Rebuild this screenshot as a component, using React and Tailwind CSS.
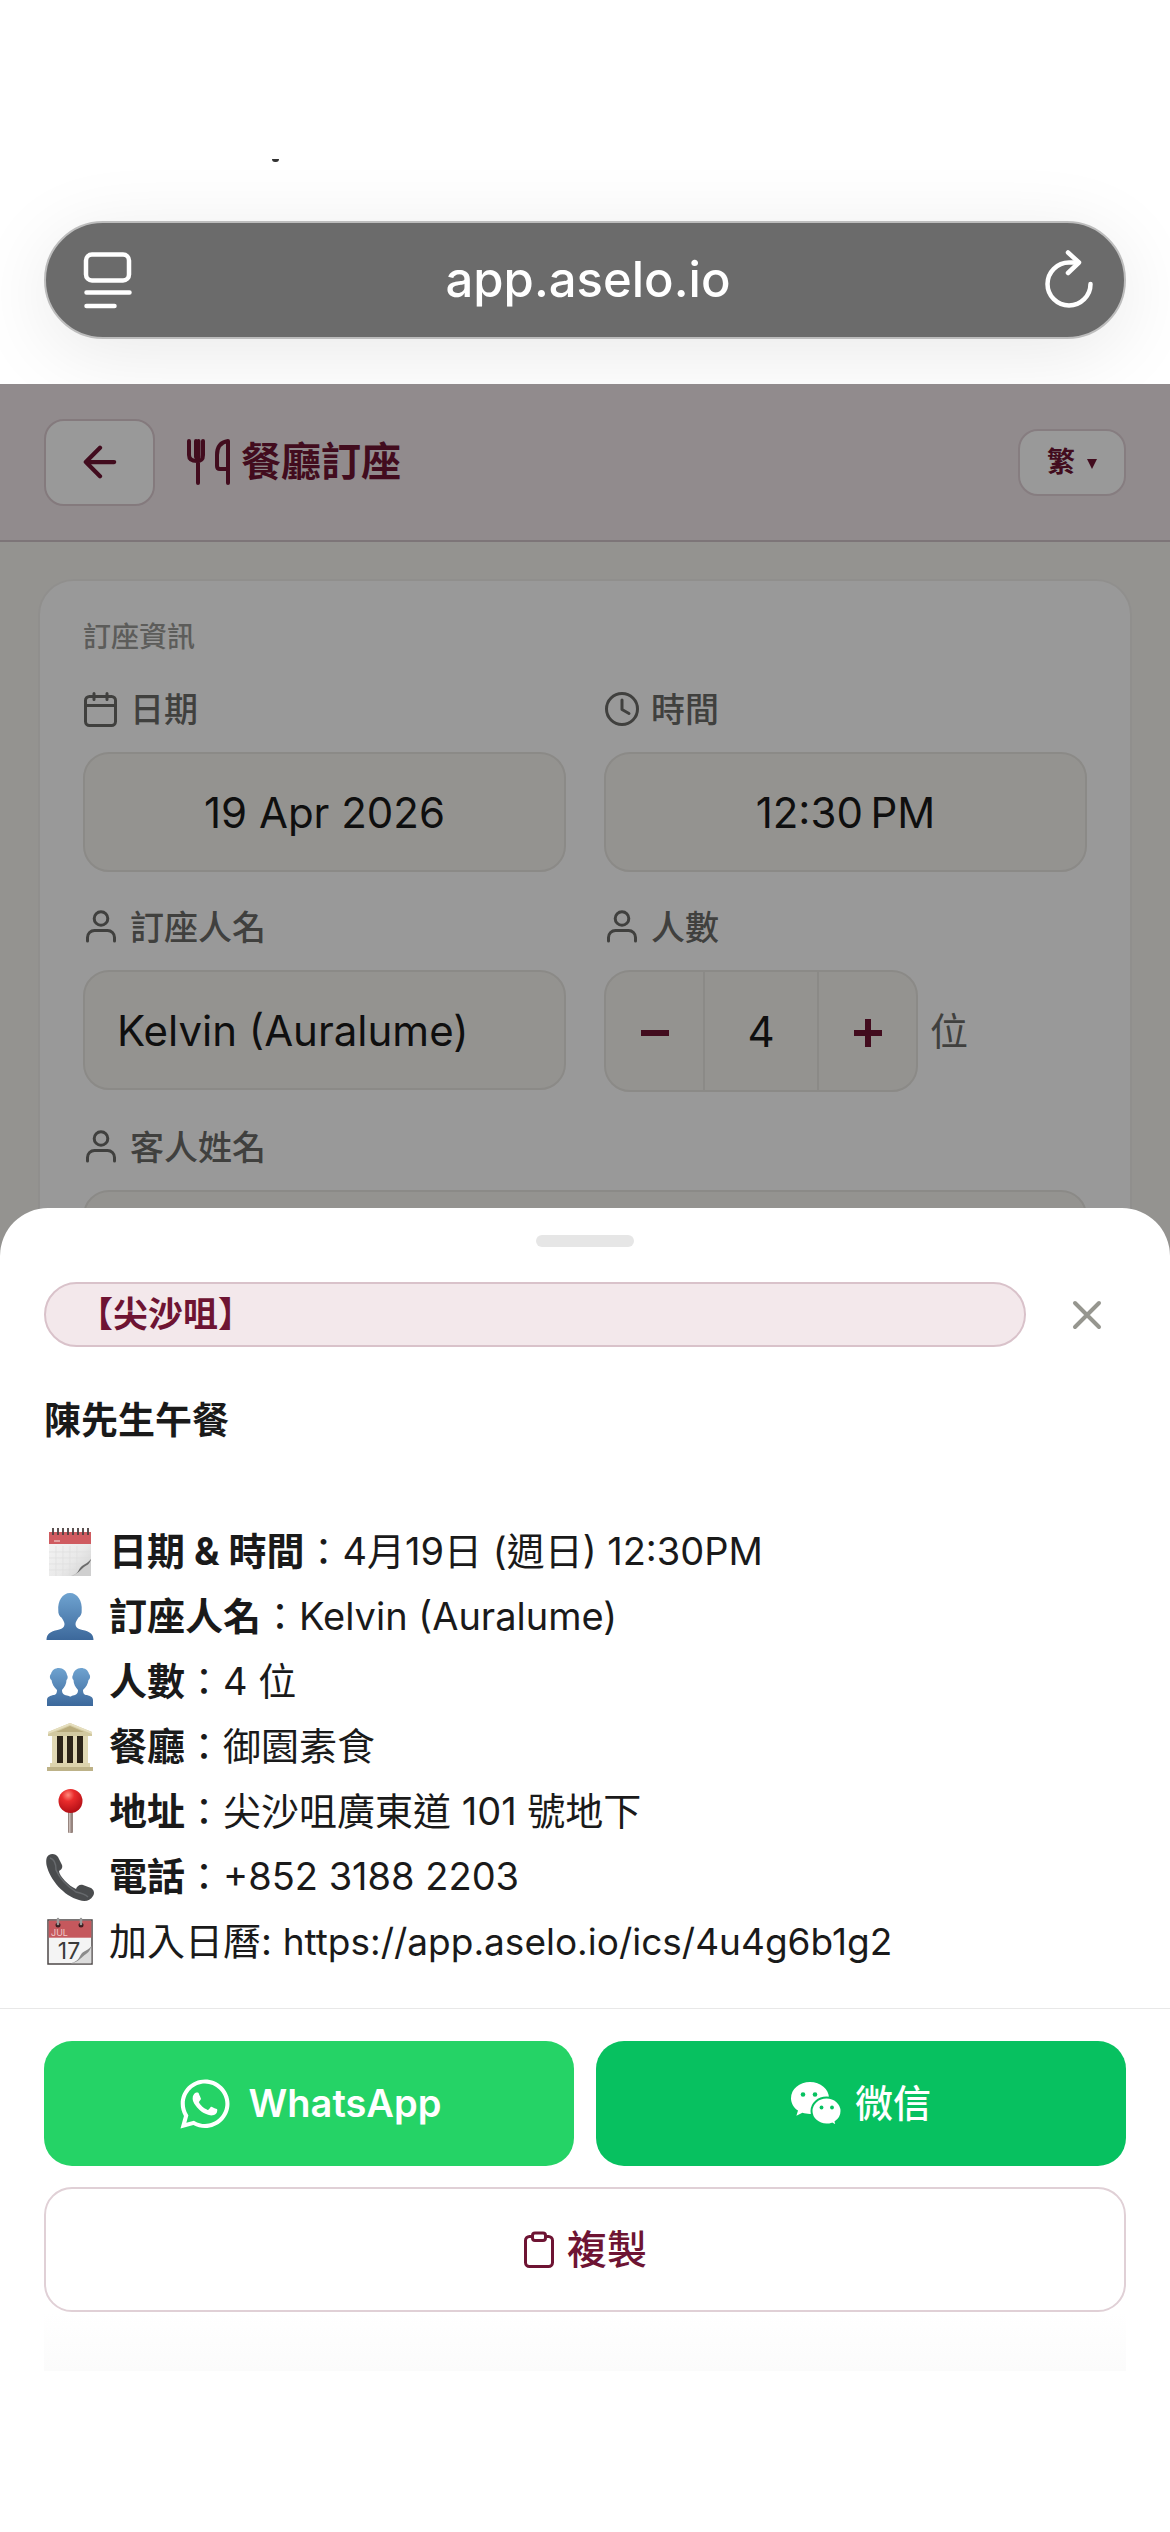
import { useState } from "react";
import { FaWhatsapp } from "react-icons/fa";

const font = "font-['Inter','Noto_Sans_CJK_TC',sans-serif]";

/* ---------- line icons ---------- */

function CalendarIcon() {
  return (
    <svg className="w-9 h-9" viewBox="0 0 36 36" fill="none" stroke="currentColor" strokeWidth="3" strokeLinecap="round">
      <rect x="2.500" y="4.500" width="30" height="29" rx="4" />
      <path d="M3 13.500h29M11 1.500v6M24 1.500v6" />
    </svg>
  );
}

function ClockIcon() {
  return (
    <svg className="w-9 h-9" viewBox="0 0 36 36" fill="none" stroke="currentColor" strokeWidth="3" strokeLinecap="round" strokeLinejoin="round">
      <circle cx="18" cy="17" r="15.500" />
      <path d="M18 8v9.500l7 4" />
    </svg>
  );
}

function PersonIcon() {
  return (
    <svg className="w-9 h-9" viewBox="0 0 36 36" fill="none" stroke="currentColor" strokeWidth="3" strokeLinecap="round">
      <circle cx="18" cy="8.500" r="6.800" />
      <path d="M4.500 31v-3.500a7 7 0 0 1 7-7h13a7 7 0 0 1 7 7V31" />
    </svg>
  );
}

function CutleryIcon() {
  return (
    <svg className="w-[44px] h-[46px]" viewBox="0 0 44 46" fill="none" stroke="currentColor" strokeWidth="4" strokeLinecap="round" strokeLinejoin="round">
      <path d="M3 2v14c0 4 3 6 8 6s6-2 6-6V2M10 2v16M12.500 2v16M12 20v24" />
      <path d="M42 44V2c-7 1-11 6-11 14v11c0 2 1 3 3 3h8" />
    </svg>
  );
}

function ClipboardIcon() {
  return (
    <svg className="w-[32px] h-[38px]" viewBox="0 0 32 38" fill="none" stroke="currentColor" strokeWidth="3" strokeLinejoin="round">
      <rect x="2.500" y="5.500" width="27" height="30" rx="4" />
      <rect x="9.500" y="2" width="13" height="7.500" rx="2.500" fill="#fff" />
    </svg>
  );
}

function WeChatIcon() {
  return (
    <svg className="w-[50px] h-[46px]" viewBox="0 0 50 46">
      <path fill="#fff" d="M19 1C8.500 1 0 8.200 0 17.200c0 5 2.700 9.400 7 12.400l-1.600 5.200 6-3c2.400.7 4.800 1.200 7.600 1.200C29.500 33 38 26 38 17S29.500 1 19 1z" />
      <path fill="#fff" stroke="#07c160" strokeWidth="2" d="M35.500 16.500c-8.300 0-15 6-15 13.500s6.700 13.500 15 13.500c2 0 3.900-.3 5.600-.9l4.700 2.500-1.200-4.300c3.600-2.500 5.900-6.400 5.900-10.800 0-7.500-6.700-13.500-15-13.500z" />
      <g fill="#07c160">
        <circle cx="12" cy="13.500" r="2.300" />
        <circle cx="24" cy="13.500" r="2.300" />
        <circle cx="30.500" cy="26.500" r="1.900" />
        <circle cx="41" cy="26.500" r="1.900" />
      </g>
    </svg>
  );
}

/* ---------- coloured row icons ---------- */

const emojiClass = "w-[52px] h-[52px] shrink-0";
const bust = "M0 47c0-6 4-8.500 11-10 5-1 7-3 7-6 0-2-1.500-4-3-6.500-2-1-3.500-4-3.200-7C11 8 16 0 23.500 0S36 8 35.200 17.500c.3 3-1.200 6-3.200 7-1.500 2.500-3 4.500-3 6.500 0 3 2 5 7 6 7 1.500 11 4 11 10z";

function NotepadEmoji() {
  return (
    <svg className={emojiClass} viewBox="0 0 52 52">
      <defs>
        <linearGradient id="page" x1="0" y1="0" x2="1" y2="1">
          <stop offset="0" stopColor="#f6f6f6" />
          <stop offset="0.6" stopColor="#e9e9e9" />
          <stop offset="1" stopColor="#cfcfcf" />
        </linearGradient>
      </defs>
      <rect x="5" y="6" width="42" height="44" fill="url(#page)" />
      <path d="M5 26h42M5 32h42M5 38h42M5 44h42M12 20v30M19 20v30M26 20v30M33 20v30" stroke="#dedede" strokeWidth="0.7" />
      <rect x="5" y="6" width="42" height="12" fill="#cf5b60" />
      <path d="M27 50c9-1 8-8 12-11 3-2 6-3 8-6v17z" fill="#cfcfcf" />
      <path d="M27 50c8-2 7-7 11-10 3-2 7-4 9-7-1 5-4 6-7 8-4 3-6 7-13 9z" fill="#6a6a6a" />
      <path d="M9 2v7M14 2v7M19 2v7M24 2v7M29 2v7M34 2v7M39 2v7M44 2v7" stroke="#4b4040" strokeWidth="1.800" />
      <path d="M10 15h6" stroke="#eab4b6" strokeWidth="1.500" />
    </svg>
  );
}

function BlueGradient({ id }) {
  return (
    <defs>
      <linearGradient id={id} x1="0" y1="0" x2="0" y2="1">
        <stop offset="0" stopColor="#6fa3d0" />
        <stop offset="1" stopColor="#3c689b" />
      </linearGradient>
    </defs>
  );
}

function PersonEmoji() {
  return (
    <svg className={emojiClass} viewBox="0 0 52 52">
      <BlueGradient id="blue-one" />
      <path transform="translate(2.500 2)" d={bust} fill="url(#blue-one)" />
    </svg>
  );
}

function PeopleEmoji() {
  return (
    <svg className={emojiClass} viewBox="0 0 52 52">
      <BlueGradient id="blue-two" />
      <g fill="url(#blue-two)">
        <path d="M3 50v-6c0-3 3-4 6-5 3 0 4-2 4-5-3-3-5-6-5.500-10-2-1-2-5-.5-6 1-4 4-6 8-6s7.500 3 8 7c1 1 1 4-.5 5 0 4-2 7-4.500 10 0 4 2 5 5 5.500 3 1 4 1 5 3v7.500z" />
        <path d="M49 50v-6c0-3-3-4-6-5-3 0-4-2-4-5 3-3 5-6 5.500-10 2-1 2-5 .5-6-1-4-4-6-8-6s-7.500 3-8 7c-1 1-1 4 .5 5 0 4 2 7 4.500 10 0 4-2 5-5 5.500-3 1-3 1-4 4l3 6.500z" />
      </g>
    </svg>
  );
}

function BankEmoji() {
  return (
    <svg className={emojiClass} viewBox="0 0 52 52">
      <rect x="8" y="14" width="36" height="30" fill="#a08c5c" />
      <path d="M13 15h6v27h-6zM23 15h6v27h-6zM33 15h6v27h-6z" fill="#2c2418" />
      <path d="M8 15h5v28H8zM19 15h4v28h-4zM29 15h4v28h-4zM39 15h5v28h-5z" fill="#e0d8b4" />
      <path d="M26 2 4 11v4h44v-4z" fill="#d2c9a0" />
      <path d="M26 5 12 11h28z" fill="#b8ab7c" />
      <path d="M26 2 4 11v2l22-9 22 9v-2z" fill="#e6dfbf" />
      <path d="M6 42h40v4H6z" fill="#dcd3ad" />
      <path d="M3 46h46v4H3z" fill="#bdb288" />
    </svg>
  );
}

function PinEmoji() {
  return (
    <svg className={emojiClass} viewBox="0 0 52 52">
      <defs>
        <radialGradient id="ball" cx="0.4" cy="0.25" r="0.75">
          <stop offset="0" stopColor="#ff8a7c" />
          <stop offset="0.35" stopColor="#ea2c2c" />
          <stop offset="1" stopColor="#b30f16" />
        </radialGradient>
      </defs>
      <rect x="24" y="24" width="5" height="23" rx="1" fill="#97857f" />
      <rect x="25" y="24" width="1.500" height="23" fill="#c9bcb7" />
      <circle cx="26.500" cy="15" r="12" fill="url(#ball)" />
    </svg>
  );
}

function PhoneEmoji() {
  return (
    <svg className={emojiClass} viewBox="0 0 52 52">
      <path
        d="M5 4c3-2 7-1 9 2l4 8c1 3-1 5-3 6 0 5 10 15 17 18 1-3 4-5 7-4l8 3c3 2 4 5 2 8-3 5-8 6-14 4C20 45 6 29 2.500 14 2 9 2 6 5 4z"
        fill="#4a4c4e"
      />
      <path d="M6 7c4 1 6 5 6 12 4 9 11 16 20 22 5 1 9 2 12 5" fill="none" stroke="#66696c" strokeWidth="1.500" />
    </svg>
  );
}

function DateEmoji() {
  return (
    <svg className={emojiClass} viewBox="0 0 52 52">
      <rect x="4" y="4" width="44" height="44" fill="#f4f4f4" stroke="#4e4848" strokeWidth="1.500" />
      <rect x="4.700" y="4.700" width="42.600" height="17" fill="#c5585d" />
      <text x="7" y="20" fontSize="9" fill="#f0c9ca" fontFamily="Inter">JUL</text>
      <text x="25" y="43" fontSize="23" fill="#3a3a3a" textAnchor="middle" fontFamily="Inter">17</text>
      <path d="M27 47.300c10-2 8-8 12-11 3-2 6-3 8.300-6v17z" fill="#dcdcdc" />
      <path d="M27 47.300c9-2 8-8 12-11 3-2 6-3 8.300-6-2 6-4 7-7 9-4 3-6 7-13.300 8z" fill="#8b8b8b" />
      <circle cx="14" cy="9" r="2.500" fill="#3d1d1f" />
      <circle cx="37" cy="9" r="2.500" fill="#3d1d1f" />
      <path d="M14 3v5M37 3v5" stroke="#9a9a9a" strokeWidth="2.500" strokeLinecap="round" />
    </svg>
  );
}

/* ---------- booking form ---------- */

const inputClass =
  "w-full h-[120px] rounded-[26px] border-2 border-[#e8e6e1] bg-[#f7f5f1] px-8 text-[42px] text-[#1a1a1a]";

function FieldLabel({ icon: Icon, htmlFor, children }) {
  return (
    <label htmlFor={htmlFor} className="flex items-center gap-[11px] h-10 mb-[22px] text-[34px] leading-10 font-medium text-[#6b6b68]">
      <Icon />
      {children}
    </label>
  );
}

function BookingForm() {
  const [guests, setGuests] = useState(4);

  return (
    <div className="mx-[38px] mt-[37px] rounded-t-[36px] border-2 border-[#f1efec] bg-white px-[43px] pt-9 pb-10">
      <h2 className="text-[28px] leading-10 text-[#9a9a96] font-medium mb-[33px]">訂座資訊</h2>
      <div className="grid grid-cols-2 gap-x-[38px] gap-y-9">
        <div>
          <FieldLabel icon={CalendarIcon} htmlFor="date">日期</FieldLabel>
          <input id="date" className={`${inputClass} text-center`} defaultValue="19 Apr 2026" />
        </div>
        <div>
          <FieldLabel icon={ClockIcon} htmlFor="time">時間</FieldLabel>
          <input id="time" className={`${inputClass} text-center`} defaultValue={"12:30\u2009PM"} />
        </div>
        <div>
          <FieldLabel icon={PersonIcon} htmlFor="booker">訂座人名</FieldLabel>
          <input id="booker" className={inputClass} defaultValue="Kelvin (Auralume)" />
        </div>
        <div>
          <FieldLabel icon={PersonIcon} htmlFor="guests">人數</FieldLabel>
          <div className="flex items-center gap-3">
            <div className="flex h-[122px] rounded-[26px] border-2 border-[#e8e6e1] bg-[#f7f5f1] text-[#6e1433] overflow-hidden">
              <button aria-label="減少" className="w-[97px] flex items-center justify-center" onClick={() => setGuests(guests - 1)}>
                <svg className="w-[30px] h-[34px]" viewBox="0 0 30 34" stroke="currentColor" strokeWidth="6">
                  <path d="M1 19h28" />
                </svg>
              </button>
              <input
                id="guests"
                className="w-[116px] border-x-2 border-[#e8e6e1] text-center text-[42px] text-[#1a1a1a]"
                value={guests}
                onChange={(e) => setGuests(Number(e.target.value) || 0)}
              />
              <button aria-label="增加" className="w-[97px] flex items-center justify-center" onClick={() => setGuests(guests + 1)}>
                <svg className="w-[30px] h-[34px]" viewBox="0 0 30 34" stroke="currentColor" strokeWidth="6">
                  <path d="M1 19h28M15 5v28" />
                </svg>
              </button>
            </div>
            <span className="text-[38px] text-[#6b6b68]">位</span>
          </div>
        </div>
        <div className="col-span-2">
          <FieldLabel icon={PersonIcon} htmlFor="customer">客人姓名</FieldLabel>
          <input id="customer" className={inputClass} />
        </div>
      </div>
    </div>
  );
}

/* ---------- confirmation sheet ---------- */

const details = [
  { icon: NotepadEmoji, label: "日期 & 時間", value: "4月19日 (週日) 12:30PM" },
  { icon: PersonEmoji, label: "訂座人名", value: "Kelvin (Auralume)" },
  { icon: PeopleEmoji, label: "人數", value: "4 位" },
  { icon: BankEmoji, label: "餐廳", value: "御園素食" },
  { icon: PinEmoji, label: "地址", value: "尖沙咀廣東道 101 號地下" },
  { icon: PhoneEmoji, label: "電話", value: "+852 3188 2203" },
];

function ShareSheet() {
  return (
    <section className="relative -mt-36 rounded-t-[48px] bg-white pt-[27px]">
      <div className="mx-auto w-[98px] h-3 rounded-full bg-[#e6e6e6]" />

      <div className="flex items-center mt-[35px] px-11">
        <div className="flex-1 h-[65px] rounded-full border-2 border-[#d9c2ca] bg-[#f3e8eb] px-8 text-[35px] leading-[61px] font-bold text-[#6e1433]">
          【尖沙咀】
        </div>
        <button aria-label="關閉" className="w-[78px] ml-[22px] h-[65px] flex items-center justify-center text-[#96968f]">
          <svg className="w-[30px] h-[30px]" viewBox="0 0 30 30" stroke="currentColor" strokeWidth="4" strokeLinecap="round">
            <path d="M3 3l24 24M27 3 3 27" />
          </svg>
        </button>
      </div>

      <div className="px-11 pt-[41px] pb-[34px] text-[38px] leading-[65px] text-[#1a1a1a] border-b border-[#e8e8e8]">
        <h2 className="text-[37px] leading-[65px] font-bold mb-[66px]">陳先生午餐</h2>
        <ul>
          {details.map((row) => (
            <li key={row.label} className="flex items-center gap-[13px] h-[65px]">
              <row.icon />
              <span>
                <strong className="font-bold">{row.label}</strong>：{row.value}
              </span>
            </li>
          ))}
          <li className="flex items-center gap-[13px] h-[65px]">
            <DateEmoji />
            <span>
              加入日曆: <a className="text-[37px]" href="https://app.aselo.io/ics/4u4g6b1g2">https://app.aselo.io/ics/4u4g6b1g2</a>
            </span>
          </li>
        </ul>
      </div>

      <div className="grid grid-cols-2 gap-x-[22px] gap-y-[21px] px-11 pt-8 text-[38px] font-medium">
        <button className="h-[125px] rounded-[28px] bg-[#25d366] text-white flex items-center justify-center gap-4 font-semibold">
          <FaWhatsapp className="w-[56px] h-[56px]" />
          WhatsApp
        </button>
        <button className="h-[125px] rounded-[28px] bg-[#07c160] text-white flex items-center justify-center gap-[14px]">
          <WeChatIcon />
          微信
        </button>
        <button className="col-span-2 h-[125px] rounded-[28px] border-2 border-[#e0d0d6] text-[#6e1433] text-[40px] flex items-center justify-center gap-3">
          <ClipboardIcon />
          複製
        </button>
      </div>

      {/* soft shade above the home indicator */}
      <div className="h-[59px] mx-11 bg-linear-to-b from-white to-[#fbfbfb]" />
    </section>
  );
}

export default function App() {
  return (
    <div className={`${font} min-h-screen bg-white overflow-hidden`}>
      {/* browser address bar */}
      <div className="pt-[159px] pb-[45px] px-11 overflow-hidden">
        <div className="ml-[228px] w-[7px] h-[3px] rounded-b-full bg-[#333]" />
        <div className="mt-[59px] h-[118px] rounded-full border-2 border-[#bdbdbd] bg-[#6b6b6b] text-white pl-[34px] pr-7 flex items-center justify-between shadow-[0_14px_80px_rgba(0,0,0,0.09)]">
          <button aria-label="Page menu">
            <svg className="w-[54px] h-[60px]" viewBox="0 0 54 60" fill="none" stroke="currentColor" strokeWidth="4.500" strokeLinecap="round">
              <rect x="6" y="4.500" width="43" height="26" rx="6" />
              <path d="M6.500 42.500h43M6.500 56h28" />
            </svg>
          </button>
          <span className="text-[49px] font-medium">app.aselo.io</span>
          <button aria-label="Reload">
            <svg className="w-[54px] h-[60px]" viewBox="0 0 54 60" fill="none" stroke="currentColor" strokeWidth="4.500" strokeLinecap="round" strokeLinejoin="round">
              <path d="M48.500 34a21.500 21.500 0 1 1-21.500-21.500h9" />
              <path d="M26 2.500 37 12.500 26 23" />
            </svg>
          </button>
        </div>
      </div>

      {/* page behind the sheet */}
      <div className="relative bg-[#f7f5f1]">
        <header className="flex items-center h-[158px] px-11 bg-[#f2e8eb] border-b-2 border-[#d0c4c8] text-[#6e1433]">
          <button aria-label="返回" className="w-[111px] h-[87px] rounded-[20px] border-2 border-[#dccbd1] bg-white flex items-center justify-center">
            <svg className="w-[34px] h-[34px]" viewBox="0 0 36 36" fill="none" stroke="currentColor" strokeWidth="4.500" strokeLinecap="round" strokeLinejoin="round">
              <path d="M33 18H3M18 3 3 18l15 15" />
            </svg>
          </button>
          <h1 className="flex items-center gap-[11px] ml-[31px] text-[40px] font-bold">
            <CutleryIcon />
            餐廳訂座
          </h1>
          <div className="ml-auto w-[108px] h-[67px] rounded-[20px] border-2 border-[#e0d0d6] bg-white flex items-center justify-center gap-[11px] text-[28px] font-bold">
            <select aria-label="語言" className="appearance-none w-[29px]">
              <option>繁</option>
            </select>
            <svg className="w-[10px] h-[14px]" viewBox="0 0 10 14" fill="currentColor">
              <path d="M0 4h10L5 14z" />
            </svg>
          </div>
        </header>
        <BookingForm />
        <div className="absolute inset-0 bg-black/40 pointer-events-none" />
      </div>

      <ShareSheet />
    </div>
  );
}
